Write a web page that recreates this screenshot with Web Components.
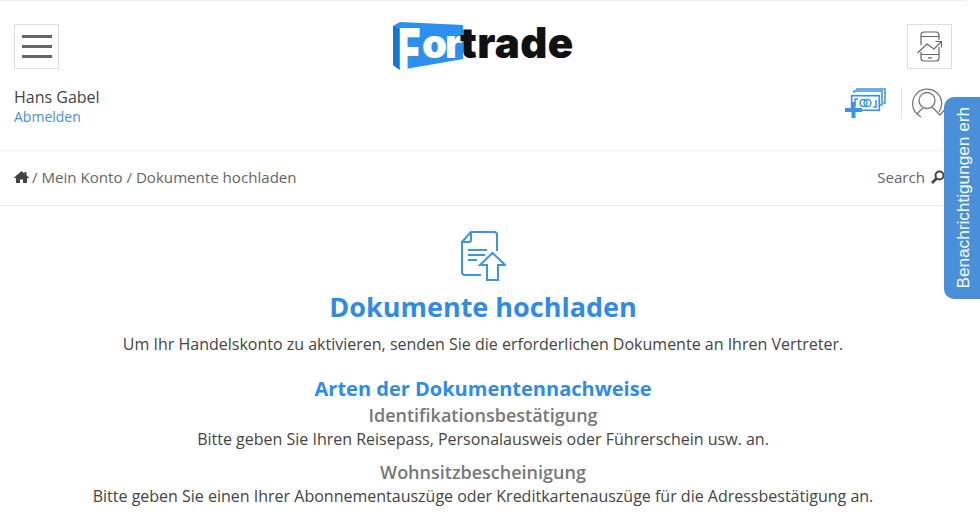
<!DOCTYPE html>
<html lang="de">
<head>
<meta charset="utf-8">
<title>Dokumente hochladen</title>
<style>
    html, body { margin: 0; height: 525px; overflow: hidden; background: #fff; }
    body { font-family: "Open Sans", sans-serif; color: #444; }
</style>
</head>
<body>
<ft-page>
    <ft-header name="Hans Gabel" logout="Abmelden"></ft-header>
    <ft-breadcrumb></ft-breadcrumb>
    <ft-upload-intro></ft-upload-intro>
</ft-page>
<ft-notify-tab>Benachrichtigungen erh</ft-notify-tab>

<script>
class FtPage extends HTMLElement {
    constructor() {
        super();
        this.attachShadow({ mode: 'open' }).innerHTML = `
            <style>
                :host { display: block; width: 966px; border-top: 1px solid #eee; }
            </style>
            <slot></slot>`;
    }
}

class FtLogo extends HTMLElement {
    constructor() {
        super();
        this.attachShadow({ mode: 'open' }).innerHTML = `
            <style>
                :host { display: block; position: relative; width: 184px; height: 50px; margin-top: -2px; font-family: Inter, sans-serif; font-weight: 900; }
                svg { position: absolute; left: 0; top: 0; }
                .word { position: relative; display: flex; align-items: baseline; height: 35px; padding: 3px 0 0 31px; }
                span { display: block; line-height: 35px; }
                .f { position: absolute; left: 7px; top: -2px; font-size: 58px; line-height: 58px; color: #fff; transform: scaleX(.66); transform-origin: 0 0; }
                .or { width: 38px; font-size: 40px; letter-spacing: -2px; color: #fff; }
                .trade { font-size: 42px; letter-spacing: .4px; color: #111; }
            </style>
            <svg width="184" height="50" viewBox="0 0 184 50">
                <path d="M2 4 9 0 72 3V37L9 48 2 43Z" fill="#2b90f0"/>
                <path d="M2 4 9 7V48L2 43Z" fill="#1c75cc"/>
            </svg>
            <span class="f">F</span>
            <div class="word"><span class="or">or</span><span class="trade">trade</span></div>`;
    }
}

class FtHeader extends HTMLElement {
    constructor() {
        super();
        this.attachShadow({ mode: 'open' }).innerHTML = `
            <style>
                :host { display: block; height: 149px; padding: 23px 14px 0; box-sizing: border-box; }
                .top { display: flex; justify-content: space-between; align-items: flex-start; height: 45px; }
                .box { width: 45px; height: 45px; box-sizing: border-box; border: 1px solid #ddd; display: flex; align-items: center; justify-content: center; }
                .bottom { display: flex; justify-content: space-between; margin-top: 18px; }
                .name { font-size: 16px; line-height: 21px; color: #444; }
                .logout { font-size: 14px; line-height: 18px; color: #4a90d9; display: block; }
                .tools { display: flex; align-items: center; height: 32px; }
                .sep { width: 1px; height: 32px; background: #e3e3e3; margin: 0 10px 0 15px; }
            </style>
            <div class="top">
                <div class="box">
                    <svg width="30" height="23" viewBox="0 0 30 23"><path d="M0 1.500h30M0 11.500h30M0 21.500h30" stroke="#666" stroke-width="3"/></svg>
                </div>
                <ft-logo></ft-logo>
                <div class="box">
                    <svg width="26" height="31" viewBox="0 0 26 31" fill="none" stroke="#666" stroke-width="1.200">
                        <path d="M4 14V4Q4 1 7 1H19Q22 1 22 4V9M4 5.500H22"/>
                        <path d="M4 21V27Q4 30 7 30H19Q22 30 22 27V16M4 23.500H22M11 26.800H15"/>
                        <path d="M0.500 22 10 13 17 18 24.500 10.500M18.500 10.500H24.500V16.500"/>
                    </svg>
                </div>
            </div>
            <div class="bottom">
                <div>
                    <div class="name">${this.getAttribute('name')}</div>
                    <a class="logout">${this.getAttribute('logout')}</a>
                </div>
                <div class="tools">
                    <svg width="41" height="31" viewBox="0 0 41 31" fill="none" stroke="#3d93e6" stroke-width="1.500">
                        <path d="M9 5V3H37V17H35M12 2V1H40V15H38"/>
                        <rect x="6.700" y="7.700" width="27.600" height="14.600" stroke-width="1.700"/>
                        <circle cx="18.500" cy="15" r="3.400"/>
                        <circle cx="22.500" cy="15" r="3.400"/>
                        <path d="M10 18V11H13M31 12V19H28"/>
                        <path d="M0 22H17M8.500 14V30" stroke-width="4"/>
                    </svg>
                    <div class="sep"></div>
                    <svg width="40" height="32" viewBox="0 0 40 32" fill="none" stroke="#777" stroke-width="1.300">
                        <path d="M27 25A14.500 14.500 0 1 0 5 27"/>
                        <circle cx="15" cy="13.500" r="8"/>
                        <path d="M5 27 9 30M5 27Q8 23.500 11 21M20 20 28 28 34 21"/>
                    </svg>
                </div>
            </div>`;
    }
}

class FtBreadcrumb extends HTMLElement {
    constructor() {
        super();
        this.attachShadow({ mode: 'open' }).innerHTML = `
            <style>
                :host { display: flex; align-items: center; justify-content: space-between; height: 56px; box-sizing: border-box; padding: 0 21px 2px 14px; border-top: 1px solid #eee; border-bottom: 1px solid #e8e8e8; font-size: 15.100px; color: #666; }
                .crumbs { display: flex; align-items: center; gap: 3px; }
                .search { display: flex; align-items: center; gap: 6px; }
            </style>
            <div class="crumbs">
                <svg width="15" height="12" viewBox="0 0 15 12"><path d="M7.500 0 10.500 2.600V1H12.500V4.300L15 6.500 14.200 7.400 13 6.400V12H9V8.500H6V12H2V6.400L0.800 7.400 0 6.500Z" fill="#444"/></svg>
                <span>/ Mein Konto / Dokumente hochladen</span>
            </div>
            <div class="search">
                <span>Search</span>
                <svg width="14" height="14" viewBox="0 0 14 14" fill="none" stroke="#444"><circle cx="8.500" cy="5.500" r="4" stroke-width="2"/><path d="M5.500 8.500 1 13" stroke-width="2.600"/></svg>
            </div>`;
    }
}

class FtUploadIntro extends HTMLElement {
    constructor() {
        super();
        this.attachShadow({ mode: 'open' }).innerHTML = `
            <style>
                :host { display: block; text-align: center; padding-top: 25px; color: #444; font-size: 16px; line-height: 24px; }
                svg { display: block; margin: 0 auto; }
                h1 { margin: 8px 0 0; font-size: 27px; line-height: 36px; font-weight: 700; color: #2f8ce6; }
                p { margin: 0; }
                .lead { margin-top: 7px; }
                h2 { margin: 19px 0 0; font-size: 20px; line-height: 28px; font-weight: 700; color: #2f8ce6; }
                h3 { margin: 0; font-size: 18px; line-height: 24px; font-weight: 600; color: #777; }
                .next { margin-top: 9px; }
            </style>
            <svg width="46" height="50" viewBox="0 0 46 50" fill="none" stroke="#3d93e6" stroke-width="2">
                <path d="M21 44H5Q2 44 2 41V11L11 1H34Q37 1 37 4V20"/>
                <path d="M2 11H9Q11 11 11 9V1"/>
                <path d="M8 19H27M8 24H25M8 29H17"/>
                <path d="M32.500 22 45 34H38V49H27V34H20Z"/>
            </svg>
            <h1>Dokumente hochladen</h1>
            <p class="lead">Um Ihr Handelskonto zu aktivieren, senden Sie die erforderlichen Dokumente an Ihren Vertreter.</p>
            <h2>Arten der Dokumentennachweise</h2>
            <h3>Identifikationsbestätigung</h3>
            <p>Bitte geben Sie Ihren Reisepass, Personalausweis oder Führerschein usw. an.</p>
            <h3 class="next">Wohnsitzbescheinigung</h3>
            <p>Bitte geben Sie einen Ihrer Abonnementauszüge oder Kreditkartenauszüge für die Adressbestätigung an.</p>`;
    }
}

class FtNotifyTab extends HTMLElement {
    constructor() {
        super();
        this.attachShadow({ mode: 'open' }).innerHTML = `
            <style>
                :host { position: fixed; left: 944px; top: 97px; width: 36px; height: 202px; box-sizing: border-box; padding: 0 0 10px 3px; display: flex; align-items: flex-end; justify-content: center; background: #4a90d9; border-radius: 10px 0 0 10px; color: #fff; font: 17.200px/33px "Liberation Sans", sans-serif; }
                .label { writing-mode: vertical-rl; transform: rotate(180deg); white-space: nowrap; }
            </style>
            <span class="label"><slot></slot></span>`;
    }
}

customElements.define('ft-page', FtPage);
customElements.define('ft-logo', FtLogo);
customElements.define('ft-header', FtHeader);
customElements.define('ft-breadcrumb', FtBreadcrumb);
customElements.define('ft-upload-intro', FtUploadIntro);
customElements.define('ft-notify-tab', FtNotifyTab);
</script>
</body>
</html>
